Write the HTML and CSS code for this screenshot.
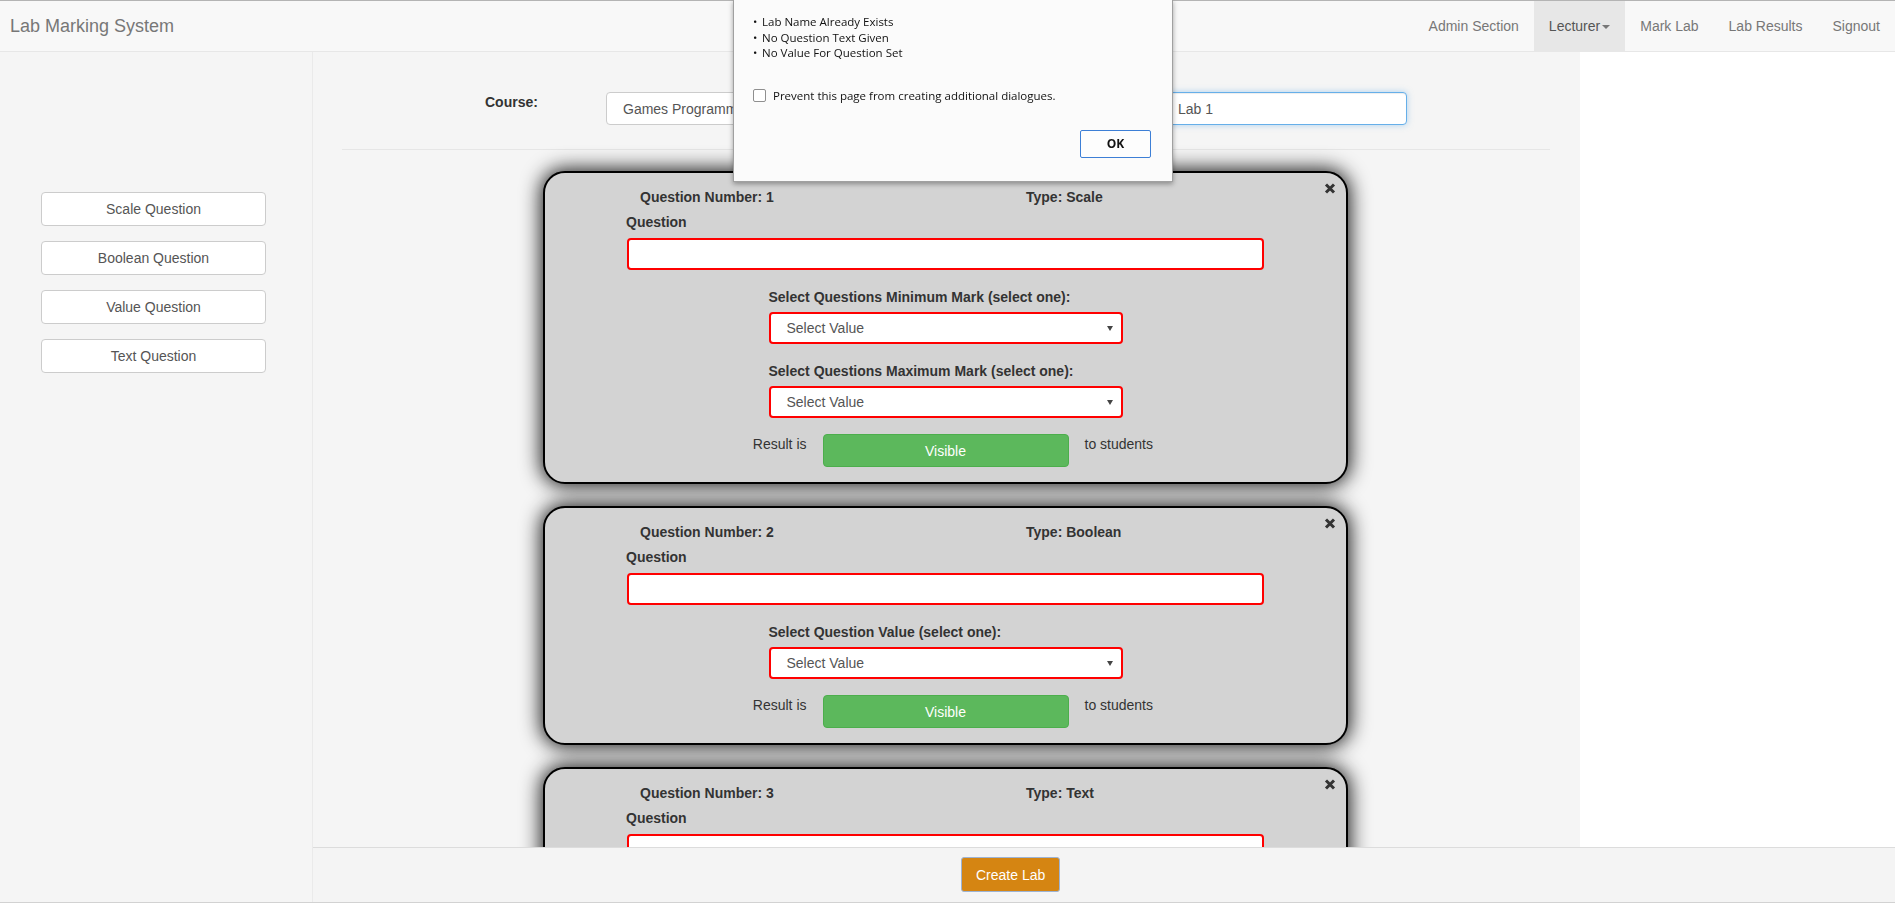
FILE: index.html
```html
<!DOCTYPE html>
<html lang="en">
<head>
<meta charset="utf-8">
<title>Lab Marking System</title>
<link rel="stylesheet" href="styles.css">
</head>
<body>
<div class="app">
  <nav class="navbar">
    <a class="brand">Lab Marking System</a>
    <ul class="nav">
      <li><a>Admin Section</a></li>
      <li class="active"><a>Lecturer<span class="caret"></span></a></li>
      <li><a>Mark Lab</a></li>
      <li><a>Lab Results</a></li>
      <li><a>Signout</a></li>
    </ul>
  </nav>
  <div class="body">
    <aside class="sidebar">
      <button class="side-btn">Scale Question</button>
      <button class="side-btn">Boolean Question</button>
      <button class="side-btn">Value Question</button>
      <button class="side-btn">Text Question</button>
    </aside>
    <div class="workspace">
      <div class="upper">
        <main class="main">
          <div class="course-row">
            <label class="row-label course-label">Course:</label>
            <div class="course-select">Games Programming</div>
            <span class="lab-spacer"></span>
            <div class="lab-input">Lab 1</div>
          </div>
          <hr class="divider">

          <section class="card">
            <span class="close"><svg width="12" height="11" viewBox="0 0 12 11"><path d="M2 1.5 L10 9.5 M10 1.5 L2 9.5" stroke="#333" stroke-width="3" fill="none"/></svg></span>
            <div class="q-head"><span>Question Number: 1</span><span>Type: Scale</span></div>
            <div class="q-block">
              <label class="lbl">Question</label>
              <div class="q-input"></div>
            </div>
            <div class="s-block">
              <label class="lbl">Select Questions Minimum Mark (select one):</label>
              <div class="sel">Select Value</div>
              <label class="lbl s-gap">Select Questions Maximum Mark (select one):</label>
              <div class="sel">Select Value</div>
            </div>
            <div class="result-row">
              <span class="r-left">Result is</span>
              <button class="visible">Visible</button>
              <span class="r-right">to students</span>
            </div>
          </section>

          <section class="card">
            <span class="close"><svg width="12" height="11" viewBox="0 0 12 11"><path d="M2 1.5 L10 9.5 M10 1.5 L2 9.5" stroke="#333" stroke-width="3" fill="none"/></svg></span>
            <div class="q-head"><span>Question Number: 2</span><span>Type: Boolean</span></div>
            <div class="q-block">
              <label class="lbl">Question</label>
              <div class="q-input"></div>
            </div>
            <div class="s-block">
              <label class="lbl">Select Question Value (select one):</label>
              <div class="sel">Select Value</div>
            </div>
            <div class="result-row">
              <span class="r-left">Result is</span>
              <button class="visible">Visible</button>
              <span class="r-right">to students</span>
            </div>
          </section>

          <section class="card">
            <span class="close"><svg width="12" height="11" viewBox="0 0 12 11"><path d="M2 1.5 L10 9.5 M10 1.5 L2 9.5" stroke="#333" stroke-width="3" fill="none"/></svg></span>
            <div class="q-head"><span>Question Number: 3</span><span>Type: Text</span></div>
            <div class="q-block">
              <label class="lbl">Question</label>
              <div class="q-input"></div>
            </div>
          </section>
        </main>
        <div class="right-pane"></div>
      </div>
      <footer class="footer">
        <button class="create">Create Lab</button>
      </footer>
    </div>
  </div>
</div>

<div class="dialog">
  <ul class="msg">
    <li>Lab Name Already Exists</li>
    <li>No Question Text Given</li>
    <li>No Value For Question Set</li>
  </ul>
  <div class="prevent"><span class="cb"></span><span>Prevent this page from creating additional dialogues.</span></div>
  <div class="dlg-actions"><button class="ok">OK</button></div>
</div>
</body>
</html>
```

FILE: styles.css
```css
* { box-sizing: border-box; }
html, body { margin: 0; padding: 0; }
body {
  font-family: "Liberation Sans", Arial, sans-serif;
  font-size: 14px;
  line-height: 20px;
  color: #333;
  width: 1895px;
  height: 903px;
  overflow: hidden;
  background: #fff;
}
.app {
  height: 903px;
  display: flex;
  flex-direction: column;
  border-bottom: 1px solid #d2d2d2;
}

/* navbar */
.navbar {
  height: 52px;
  flex: none;
  display: flex;
  justify-content: space-between;
  background: #f8f8f8;
  border-top: 1px solid #b4b4b4;
  border-bottom: 1px solid #e7e7e7;
}
.brand {
  padding: 15px 10px;
  font-size: 18px;
  line-height: 20px;
  color: #777;
}
.nav {
  list-style: none;
  margin: 0;
  padding: 0;
  display: flex;
}
.nav a {
  display: block;
  padding: 15px;
  line-height: 20px;
  color: #777;
}
.nav .active a { background: #e7e7e7; color: #555; }
.caret {
  display: inline-block;
  width: 0;
  height: 0;
  margin-left: 2px;
  vertical-align: middle;
  border-top: 4px solid #777;
  border-left: 4px solid transparent;
  border-right: 4px solid transparent;
}

/* body */
.body {
  flex: 1;
  display: flex;
  min-height: 0;
}
.sidebar {
  width: 313px;
  flex: none;
  background: #f5f5f5;
  border-right: 1px solid #eaeaea;
  padding: 140px 0 0 41px;
  display: flex;
  flex-direction: column;
  align-items: flex-start;
  gap: 15px;
}
.side-btn {
  width: 225px;
  height: 34px;
  background: #fff;
  border: 1px solid #ccc;
  border-radius: 4px;
  font-family: "Liberation Sans", Arial, sans-serif;
  font-size: 14px;
  color: #555;
  padding: 0;
}
.workspace {
  flex: 1;
  display: flex;
  flex-direction: column;
  min-width: 0;
}
.upper {
  flex: 1;
  display: flex;
  min-height: 0;
  overflow: hidden;
}
.main {
  width: 1267px;
  flex: none;
  background: #f5f5f5;
  padding: 40px 30px 0 28px;
  overflow: hidden;
}
.right-pane { flex: 1; background: #fff; }

.course-row {
  display: flex;
  align-items: flex-start;
  padding-left: 144px;
  height: 33px;
}
.row-label { font-weight: bold; line-height: 20px; }
.course-label { width: 121px; }
.course-select {
  width: 300px;
  height: 33px;
  background: #fff;
  border: 1px solid #ccc;
  border-radius: 4px;
  padding: 6px 16px;
  color: #555;
}
.lab-spacer { width: 259px; }
.lab-input {
  width: 242px;
  height: 33px;
  background: #fff;
  border: 1px solid #66afe9;
  border-radius: 4px;
  padding: 6px 12px;
  color: #555;
  box-shadow: inset 0 1px 1px rgba(0,0,0,.075), 0 0 6px rgba(102,175,233,.5);
}
.divider {
  margin: 24px 0 21px 1px;
  border: 0;
  border-top: 1px solid #e6e6e6;
  height: 0;
}

/* question cards */
.card {
  position: relative;
  width: 805px;
  margin: 0 auto 22px;
  background: #d3d3d3;
  border: 2px solid #000;
  border-radius: 22px;
  box-shadow: 0 0 20px 2px rgba(0,0,0,.9);
  padding: 14px 0 15px;
}
.close {
  position: absolute;
  top: 10px;
  right: 10px;
  width: 12px;
  height: 11px;
  line-height: 0;
}
.q-head {
  display: grid;
  grid-template-columns: 386px auto;
  padding-left: 95px;
  font-weight: bold;
}
.lbl {
  display: block;
  font-weight: bold;
  line-height: 20px;
}
.q-block {
  width: 637px;
  margin: 5px auto 0;
}
.q-block .lbl { margin-left: -1px; margin-bottom: 6px; }
.q-input {
  height: 32px;
  background: #fff;
  border: 2px solid #f00;
  border-radius: 4px;
}
.s-block {
  width: 354px;
  margin: 17px auto 0;
}
.s-block .lbl { margin-bottom: 5px; }
.s-block .s-gap { margin-top: 17px; }
.sel {
  position: relative;
  height: 32px;
  background: #fff;
  border: 2px solid #f00;
  border-radius: 4px;
  padding: 4px 16px;
  color: #555;
}
.sel::after {
  content: "";
  position: absolute;
  right: 8px;
  top: 12px;
  border-top: 5px solid #444;
  border-left: 3px solid transparent;
  border-right: 3px solid transparent;
}
.result-row {
  display: grid;
  grid-template-columns: 1fr 246px 1fr;
  column-gap: 16px;
  align-items: start;
  margin-top: 16px;
}
.r-left { justify-self: end; }
.r-right { justify-self: start; }
.visible {
  height: 33px;
  background: #5cb85c;
  border: 1px solid #4cae4c;
  border-radius: 4px;
  color: #fff;
  font-family: "Liberation Sans", Arial, sans-serif;
  font-size: 14px;
  padding: 0;
}

/* footer */
.footer {
  height: 55px;
  flex: none;
  background: #f4f4f4;
  border-top: 1px solid #dcdcdc;
  padding: 9px 0 0 648px;
}
.create {
  height: 35px;
  padding: 0 14px;
  background: #d58512;
  border: 1px solid #9db3d3;
  border-radius: 3px;
  color: #fff;
  font-family: "Liberation Sans", Arial, sans-serif;
  font-size: 14px;
}

/* alert dialog */
.dialog {
  position: fixed;
  top: 0;
  left: 733px;
  width: 440px;
  height: 182px;
  background: #fbfbfb;
  border: 1px solid #a0a0a0;
  border-top: 0;
  box-shadow: 0 2px 5px rgba(0,0,0,.35);
  font-family: "Open Sans", "Noto Sans", sans-serif;
  font-size: 11.5px;
  color: #111;
  padding: 14px 0 0 19px;
}
.msg {
  list-style: none;
  margin: 0;
  padding: 0;
  line-height: 15.5px;
}
.msg li::before {
  content: "\2022";
  display: inline-block;
  width: 9px;
}
.prevent {
  display: flex;
  align-items: center;
  gap: 7px;
  margin-top: 28px;
  height: 14px;
}
.cb {
  width: 13px;
  height: 13px;
  border: 1px solid #8f8f8f;
  border-radius: 2px;
  background: #fff;
  flex: none;
}
.dlg-actions {
  display: flex;
  justify-content: flex-end;
  padding-right: 21px;
  margin-top: 27px;
}
.ok {
  width: 71px;
  height: 28px;
  background: #fdfdfd;
  border: 1px solid #3d7fd6;
  border-radius: 2px;
  font-family: "Open Sans", "Noto Sans", sans-serif;
  font-weight: bold;
  font-size: 12px;
  color: #111;
  padding: 0;
}
```
